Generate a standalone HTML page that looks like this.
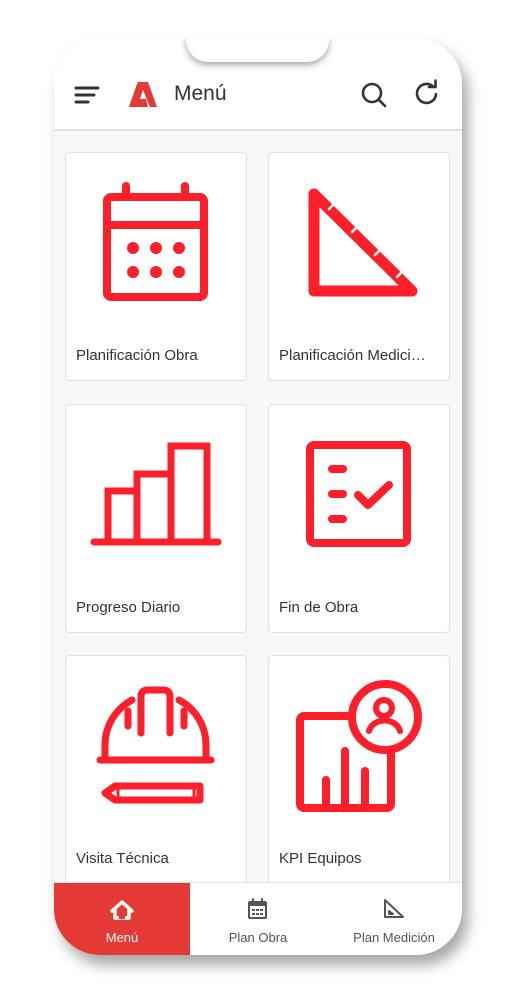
<!DOCTYPE html><html><head><meta charset="utf-8"><style>
html,body{margin:0;padding:0;width:515px;height:993px;background:#fff;overflow:hidden;font-family:"Liberation Sans",sans-serif}
.phone{position:absolute;left:54px;top:38px;width:408px;height:917px;border-radius:46px;background:#f7f8fa;overflow:hidden;box-shadow:6px 10px 14px rgba(0,0,0,.35)}
.hdr{position:absolute;left:0;top:0;width:408px;height:91px;background:#fff;border-bottom:2px solid #dfe1e6}
.notch{position:absolute;left:132px;top:-2px;width:143px;height:26px;background:#fff;border-radius:0 0 22px 22px;box-shadow:0 3px 7px rgba(0,0,0,.35)}
.card{position:absolute;width:182px;background:#fff;border:1px solid #dfe1e5;border-radius:4px;box-sizing:border-box}
.lbl{position:absolute;left:10px;font-size:15px;color:#333;white-space:nowrap}
.nav{position:absolute;left:0;top:844px;width:408px;height:73px;background:#fff;border-top:1px solid #e4e4e4}
.ni{position:absolute;top:0;height:73px;text-align:center;font-size:13px;color:#555}
</style></head><body>
<div class="phone">
<div class="hdr">
<div style="position:absolute;left:120px;top:44px;font-size:21px;color:#333">Menú</div>
</div>
<div class="notch"></div>
<div class="card" style="left:11px;top:114px;height:229px"><div class="lbl" style="top:194px">Planificación Obra</div></div>
<div class="card" style="left:214px;top:114px;height:229px"><div class="lbl" style="top:194px">Planificación Medici…</div></div>
<div class="card" style="left:11px;top:366px;height:229px"><div class="lbl" style="top:194px">Progreso Diario</div></div>
<div class="card" style="left:214px;top:366px;height:229px"><div class="lbl" style="top:194px">Fin de Obra</div></div>
<div class="card" style="left:11px;top:617px;height:240px"><div class="lbl" style="top:194px">Visita Técnica</div></div>
<div class="card" style="left:214px;top:617px;height:240px"><div class="lbl" style="top:194px">KPI Equipos</div></div>
<div class="nav">
<div class="ni" style="left:0;width:136px;background:#e53935;color:#fff"><div style="position:absolute;top:47px;width:136px">Menú</div></div>
<div class="ni" style="left:136px;width:136px"><div style="position:absolute;top:47px;width:136px">Plan Obra</div></div>
<div class="ni" style="left:272px;width:136px"><div style="position:absolute;top:47px;width:136px">Plan Medición</div></div>
</div>
</div>
<svg width="515" height="993" style="position:absolute;left:0;top:0" fill="none" stroke-linecap="round" stroke-linejoin="round">
<g stroke="#333" stroke-width="3"><line x1="76" y1="88" x2="98" y2="88"/><line x1="76" y1="95" x2="94" y2="95"/><line x1="76" y1="102" x2="88" y2="102"/></g>
<path d="M129 107 L138 82 L148 82 L157 107 L150 107 L143 90 L140 99 L146 99 L148 107 Z" fill="#e53935"/>
<path d="M140 88 L134 107 L129 107 L137 84Z" fill="#e53935"/>
<g stroke="#333" stroke-width="2.6"><circle cx="372" cy="93" r="9"/><line x1="379" y1="100" x2="385" y2="106"/>
<path d="M436 94 A9.5 9.5 0 1 1 433 86.5"/><path d="M429 87 L435.5 87 L435.5 80.5"/></g>
<g stroke="#ff1f2b" stroke-width="8"><rect x="107" y="197" width="97" height="100" rx="4"/><line x1="107" y1="225" x2="204" y2="225"/><line x1="126" y1="186" x2="126" y2="194"/><line x1="185" y1="186" x2="185" y2="194"/></g>
<g fill="#ff1f2b"><circle cx="133" cy="248" r="6"/><circle cx="156" cy="248" r="6"/><circle cx="179" cy="248" r="6"/><circle cx="133" cy="272" r="6"/><circle cx="156" cy="272" r="6"/><circle cx="179" cy="272" r="6"/></g>
<path d="M314 194 L412 291 L314 291 Z" stroke="#ff1f2b" stroke-width="11"/>
<g stroke="#fff" stroke-width="2.5"><line x1="333" y1="205" x2="329" y2="209"/><line x1="356" y1="228" x2="352" y2="232"/><line x1="379" y1="251" x2="375" y2="255"/><line x1="401" y1="273" x2="397" y2="277"/></g>
<g stroke="#ff1f2b" stroke-width="7"><line x1="94" y1="542" x2="218" y2="542"/><path d="M108 542 V491 H137 V542 M137 491 V474 H171 V542 M171 474 V446 H207 V542" stroke-linejoin="miter"/></g>
<g stroke="#ff1f2b" stroke-width="8"><rect x="310" y="445" width="97" height="98" rx="4"/><line x1="332" y1="469" x2="343" y2="469"/><line x1="332" y1="494" x2="343" y2="494"/><line x1="332" y1="519" x2="343" y2="519"/><path d="M358 495 L368 505 L389 485"/></g>
<g stroke="#ff1f2b" stroke-width="7"><line x1="100" y1="760" x2="211" y2="760"/><path d="M105 757 V745 A51 51 0 0 1 132 700 M179 700 A51 51 0 0 1 206 745 V757"/><path d="M141 733 V696 A6 6 0 0 1 147 690 H164 A6 6 0 0 1 170 696 V733"/><line x1="128" y1="711" x2="128" y2="726"/><line x1="184" y1="711" x2="184" y2="726"/><path d="M105 793 L115 786 H200 V800 H115 Z"/><line x1="118" y1="787" x2="118" y2="799" stroke-width="3"/><line x1="194" y1="787" x2="194" y2="799" stroke-width="3"/></g>
<g stroke="#ff1f2b" stroke-width="8"><path d="M350 716 H304 A4 4 0 0 0 300 720 V804 A4 4 0 0 0 304 808 H387 A4 4 0 0 0 391 804 V753"/><circle cx="385" cy="717" r="33"/><line x1="326" y1="780" x2="326" y2="806"/><line x1="345" y1="751" x2="345" y2="806"/><line x1="365" y1="771" x2="365" y2="806"/></g>
<g stroke="#ff1f2b" stroke-width="6"><circle cx="384" cy="708" r="8"/><path d="M369 731 A16 14 0 0 1 400 731"/></g>
<path d="M112 911 L122 902 L132 911 M115 909 V918 H129 V909" stroke="#fff" stroke-width="3.5" fill="none"/>
<rect x="119" y="912" width="6" height="7" fill="#e53935"/>
<g stroke="#555" stroke-width="2"><rect x="249" y="902" width="17" height="16" rx="1"/><line x1="253" y1="899" x2="253" y2="903"/><line x1="262" y1="899" x2="262" y2="903"/></g>
<rect x="249" y="902" width="17" height="4" fill="#555"/>
<g fill="#555"><rect x="252" y="909" width="3" height="2"/><rect x="256" y="909" width="3" height="2"/><rect x="260" y="909" width="3" height="2"/><rect x="252" y="913" width="3" height="2"/><rect x="256" y="913" width="3" height="2"/><rect x="260" y="913" width="3" height="2"/></g>
<path d="M385 900 L403 917 H385 Z M389 911 L393 914 H389Z" stroke="#555" stroke-width="2"/>
</svg>
</body></html>
